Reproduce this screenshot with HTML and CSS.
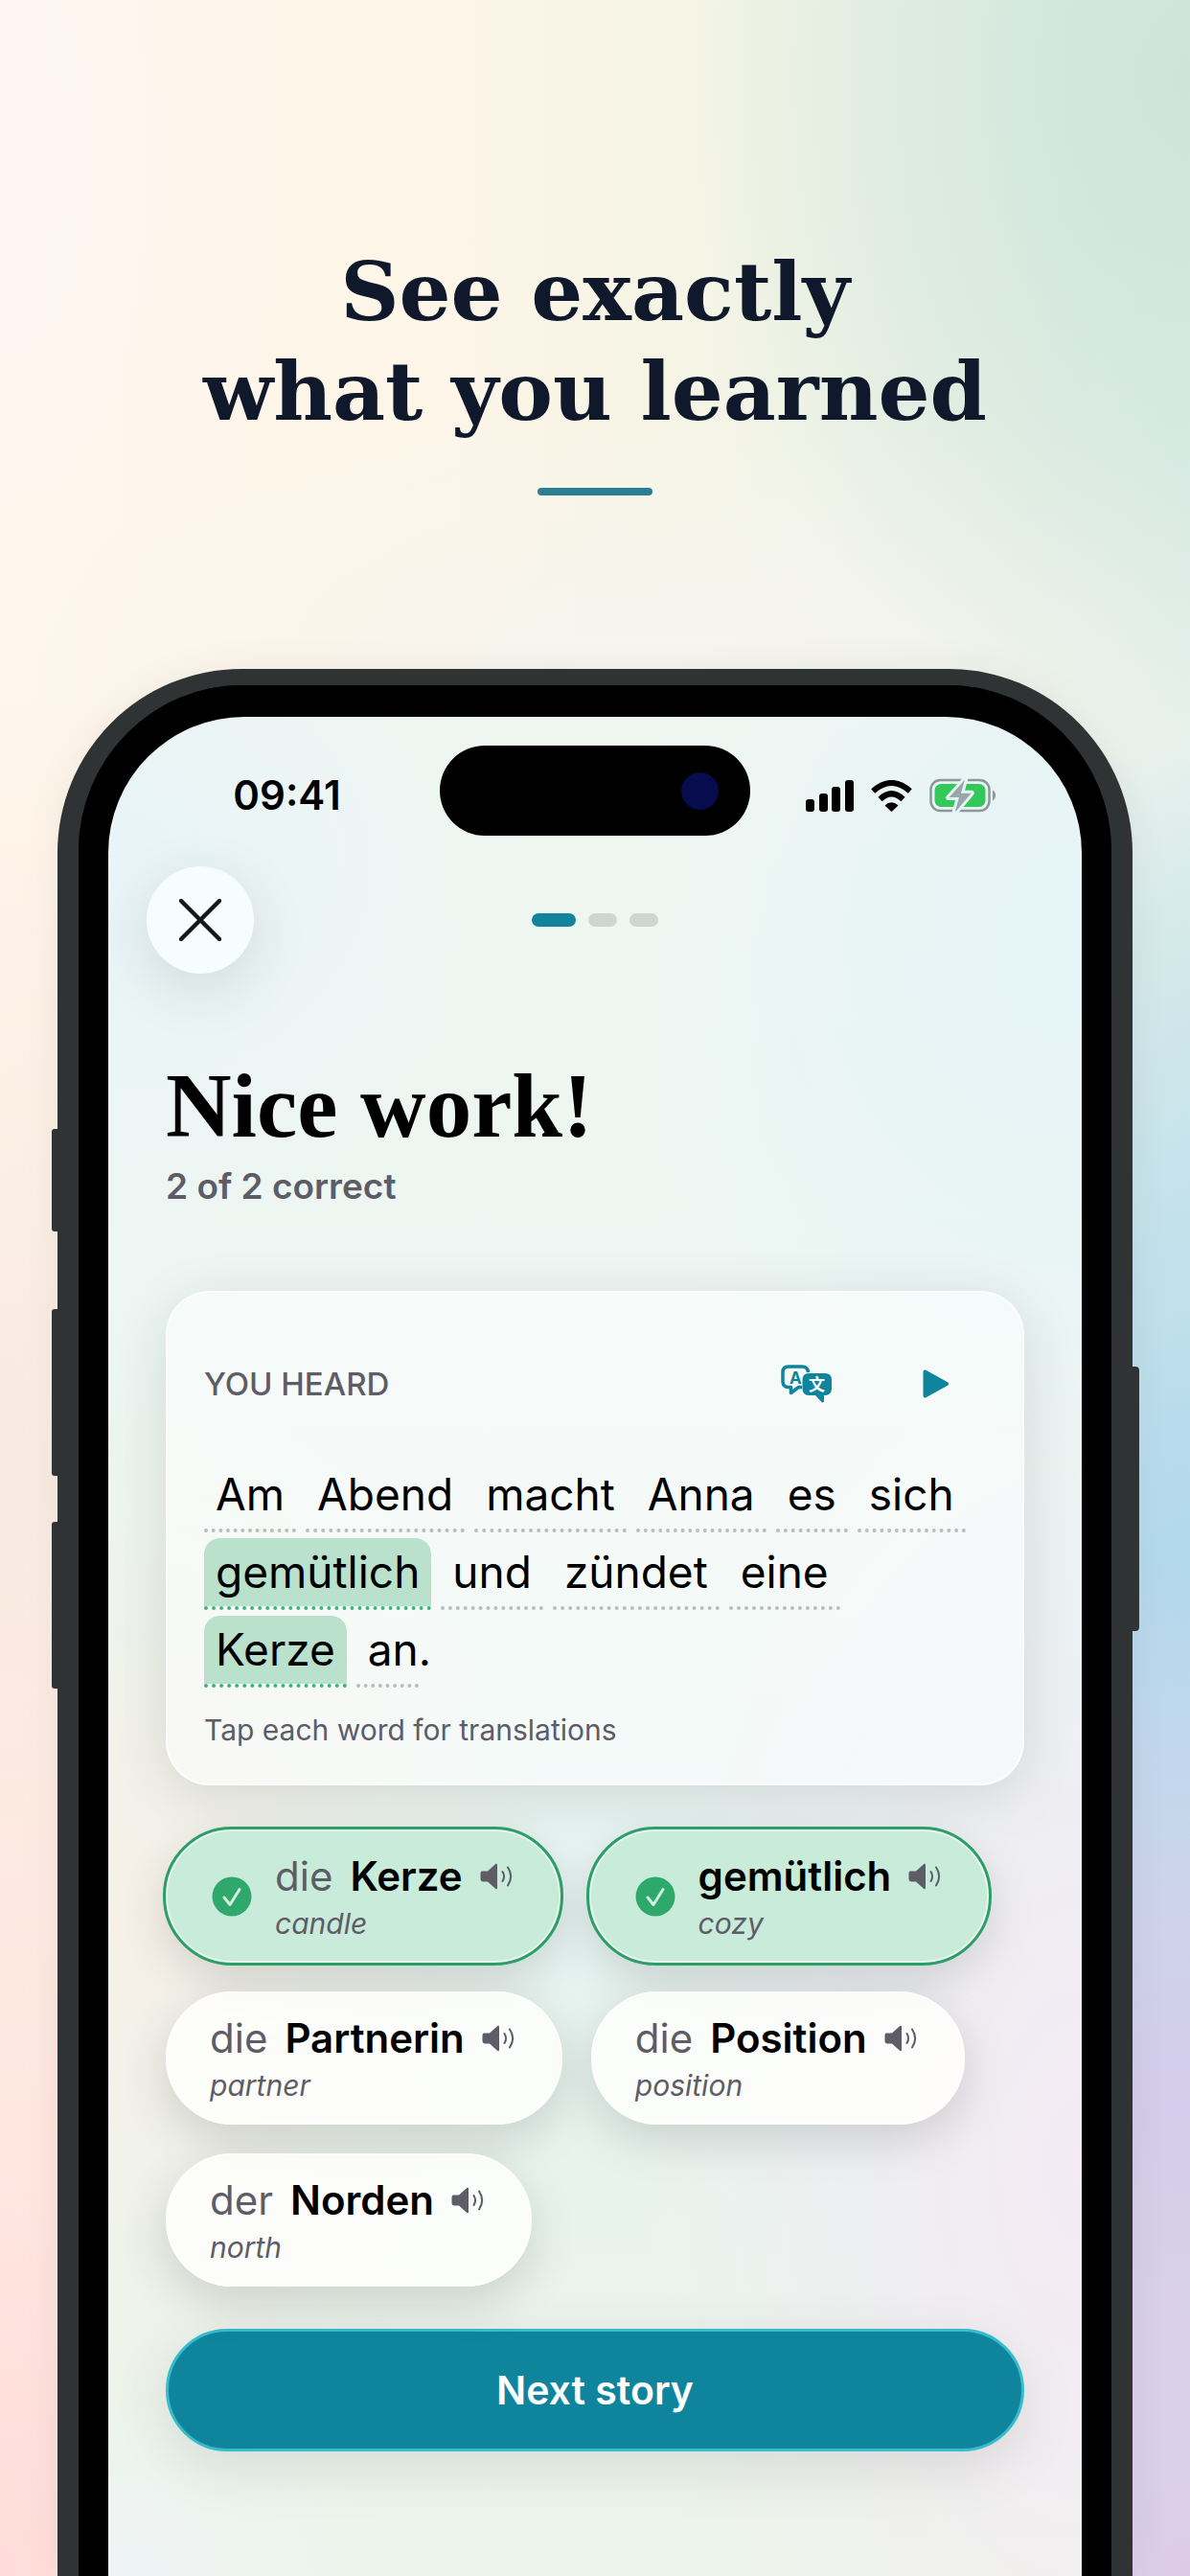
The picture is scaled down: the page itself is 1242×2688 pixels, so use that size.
FILE: index.html
```html
<!DOCTYPE html>
<html lang="en">
<head>
  <meta charset="UTF-8" />
  <meta name="viewport" content="width=device-width, initial-scale=1.0"/>
  <title>See exactly what you learned</title>
  <link rel="stylesheet" href="styles.css">
</head>
<body>
  <!-- shared icons -->
  <svg class="sprite" aria-hidden="true">
    <symbol id="speaker" viewBox="0 0 34 28">
      <path fill="currentColor" d="M2 8.500h6L16 1.200c1-.9 2-.5 2 .8v24c0 1.300-1 1.700-2 .8L8 19.500H3.500C1.500 19.500.5 18.500.5 16.500v-5c0-2 .5-3 1.500-3z"/>
      <path fill="none" stroke="currentColor" stroke-width="2" stroke-linecap="round" d="M23.500 9c2 3.200 2 6.800 0 10M29 4.500c4 6 4 13 0 19"/>
    </symbol>
    <symbol id="check" viewBox="0 0 42 42">
      <circle cx="21" cy="21" r="20.500" fill="#2fa86c"/>
      <path fill="none" stroke="#d3efdf" stroke-width="3" stroke-linecap="round" stroke-linejoin="round" d="M13 22l6 7.500L29 13.500"/>
    </symbol>
  </svg>

  <header class="hero">
    <h1>See exactly<br>what you learned</h1>
    <div class="rule"></div>
  </header>

  <main class="phone">
    <span class="side-btn action"></span>
    <span class="side-btn vol-up"></span>
    <span class="side-btn vol-down"></span>
    <span class="side-btn power"></span>

    <div class="bezel">
      <div class="screen">
        <div class="status">
          <span class="time">09:41</span>
          <div class="island"><span class="camera"></span></div>
          <div class="status-icons">
            <svg width="50" height="33" viewBox="0 0 50 33">
              <rect x="0" y="20" width="9" height="13" rx="3"/>
              <rect x="14" y="14" width="9" height="19" rx="3"/>
              <rect x="27" y="7" width="9" height="26" rx="3"/>
              <rect x="41" y="0" width="9" height="33" rx="3"/>
            </svg>
            <svg width="43" height="33" viewBox="0 0 43 33">
              <path fill="none" stroke="#000" stroke-width="6" d="M2.200 11.500Q21.500-5.500 40.800 11.500M9.500 20Q21.500 8.500 33.500 20"/>
              <path d="M14.500 26.500q7-6.500 14 0l-6.300 6q-.7.600-1.400 0z"/>
            </svg>
            <svg width="70" height="36" viewBox="0 0 70 36">
              <rect x="1.500" y="2" width="61" height="32" rx="10" fill="none" stroke="#8f9698" stroke-width="2.500"/>
              <path d="M66 12.500c4 2 4 9 0 11z" fill="#8f9698"/>
              <rect x="5.500" y="6" width="53" height="24" rx="6.500" fill="#34c759"/>
              <path d="M36.500 0L19 19.500q-1 2 1 2h9L25 36h3.500L45 16.500q1-2.200-1.200-2.200H35L39 0z" fill="#9aa6a8" stroke="#e5f4f7" stroke-width="3"/>
            </svg>
          </div>
        </div>

        <nav class="topbar">
          <button class="close" type="button" aria-label="Close">
            <svg width="44" height="44" viewBox="0 0 44 44"><path d="M2 2l40 40M42 2L2 42" stroke="#13191b" stroke-width="4.500" stroke-linecap="round"/></svg>
          </button>
          <div class="steps"><i class="on"></i><i></i><i></i></div>
        </nav>

        <div class="content">
          <h2>Nice work!</h2>
          <p class="score">2 of 2 correct</p>

          <section class="card">
            <div class="card-head">
              <h3>YOU HEARD</h3>
              <button class="icon-btn" type="button" aria-label="Translate">
                <svg width="54" height="40" viewBox="0 0 54 40">
                  <path fill="none" stroke="#0f859d" stroke-width="3.500" stroke-linejoin="round" d="M22 23.500h-3.500l-8 6v-6H8q-6 0-6-6V8q0-6 6-6h14q6 0 6.500 6"/>
                  <path fill="#0f859d" d="M29 9h17q7 0 7 7v9q0 6.500-7 7h-1v6.500q-1 1.500-2.500.5L36 32h-7q-6.500-.5-6.500-7v-9q0-7 6.500-7z"/>
                  <text class="lat" x="9" y="20">A</text>
                  <text class="han" x="29" y="27">文</text>
                </svg>
              </button>
              <button class="icon-btn" type="button" aria-label="Play">
                <svg width="27" height="30" viewBox="0 0 27 30"><path d="M2.500 2.500v25L25 15z" fill="#0f859d" stroke="#0f859d" stroke-width="4" stroke-linejoin="round"/></svg>
              </button>
            </div>
            <div class="sentence" lang="de">
              <button type="button">Am</button>
              <button type="button">Abend</button>
              <button type="button">macht</button>
              <button type="button">Anna</button>
              <button type="button">es</button>
              <button type="button">sich</button>
              <button type="button" class="hit">gemütlich</button>
              <button type="button">und</button>
              <button type="button">zündet</button>
              <button type="button">eine</button>
              <button type="button" class="hit">Kerze</button>
              <span class="end"><button type="button">an</button>.</span>
            </div>
            <p class="hint">Tap each word for translations</p>
          </section>

          <div class="chips">
            <button type="button" class="chip known">
              <svg class="tick"><use href="#check"/></svg>
              <span class="word"><span class="de">die <b>Kerze</b><svg class="say"><use href="#speaker"/></svg></span><em>candle</em></span>
            </button>
            <button type="button" class="chip known">
              <svg class="tick"><use href="#check"/></svg>
              <span class="word"><span class="de"><b>gemütlich</b><svg class="say"><use href="#speaker"/></svg></span><em>cozy</em></span>
            </button>
            <button type="button" class="chip">
              <span class="word"><span class="de">die <b>Partnerin</b><svg class="say"><use href="#speaker"/></svg></span><em>partner</em></span>
            </button>
            <button type="button" class="chip">
              <span class="word"><span class="de">die <b>Position</b><svg class="say"><use href="#speaker"/></svg></span><em>position</em></span>
            </button>
            <button type="button" class="chip">
              <span class="word"><span class="de">der <b>Norden</b><svg class="say"><use href="#speaker"/></svg></span><em>north</em></span>
            </button>
          </div>

          <button type="button" class="next">Next story</button>
        </div>
      </div>
    </div>
  </main>
</body>
</html>
```

FILE: styles.css
```css
* { box-sizing: border-box; margin: 0; padding: 0;}
body {
  font-family: Inter, "Liberation Sans", sans-serif;
  min-height: 100vh;
  display: flex;
  flex-direction: column;
  overflow-x: hidden;
  background:
    radial-gradient(ellipse 42% 26% at 100% 3%, #cde4d8 0%, #cde4d800 100%),
    radial-gradient(ellipse 50% 40% at 0% 100%, #ffdcd9 0%, #ffdcd900 100%),
    radial-gradient(ellipse 50% 30% at 100% 100%, #dccbe8 0%, #dccbe800 100%),
    radial-gradient(ellipse 50% 22% at 100% 82%, #cfcdec 0%, #cfcdec00 100%),
    radial-gradient(ellipse 50% 32% at 100% 61%, #b0d8ec 0%, #b0d8ec00 100%),
    radial-gradient(ellipse 50% 30% at 0% 57%, #f9eae1 0%, #f9eae100 100%),
    radial-gradient(ellipse 60% 12% at 60% 27%, #f6f5f0 0%, #f6f5f000 100%),
    radial-gradient(ellipse 25% 26% at 0% 6%, #fff6f3 0%, #fff6f300 100%),
    linear-gradient(90deg, #fff6ea 0%, #fdf5e8 38%, #f6f5e5 55%, #e9f1e6 80%, #deeeea 100%);
}
button { font: inherit; color: inherit; border: none; background: none; cursor: pointer;}
.sprite { position: absolute; width: 0; height: 0;}

.hero { padding: 252px 40px 181px; text-align: center;}
.hero h1 { font: bold 85px/104px "DejaVu Serif", serif; color: #10192b;}
.rule { width: 120px; height: 8px; margin: 49px auto 0; border-radius: 4px; background: #2a7f92;}

/* phone frame */
.phone { position: relative; flex: 1; display: flex; margin: 0 60px; border: solid #2f3333; border-width: 17px 22px 0; border-radius: 192px 192px 0 0; background: #000; box-shadow: 0 0 40px #0000000f;}
.bezel { flex: 1; display: flex; min-width: 0; border: solid #000; border-width: 33px 31px 0; border-radius: 172px 172px 0 0; background: #000;}
.side-btn { position: absolute; left: -28px; width: 8px; height: 174px; border-radius: 3px 0 0 3px; background: #2f3333;}
.action { top: 463px; height: 107px;}
.vol-up { top: 651px;}
.vol-down { top: 873px;}
.power { left: auto; right: -29px; top: 711px; height: 276px; border-radius: 0 4px 4px 0;}

.screen {
  flex: 1;
  min-width: 0;
  border-radius: 142px 142px 0 0;
  padding: 30px 0 60px;
  background:
    radial-gradient(ellipse 45% 30% at 0% 65%, #f6f0e7 0%, #f6f0e700 100%),
    radial-gradient(ellipse 45% 45% at 100% 78%, #f4ebf4 0%, #f4ebf400 100%),
    radial-gradient(ellipse 45% 20% at 0% 8%, #e8f4f8 0%, #e8f4f800 100%),
    radial-gradient(ellipse 50% 30% at 100% 12%, #e4f4f7 0%, #e4f4f700 100%),
    radial-gradient(ellipse 30% 10% at 0% 100%, #eff3f5 0%, #eff3f500 100%),
    linear-gradient(#f0f6f0 0%, #edf6f2 30%, #e6f3f0 65%, #edf4ea 100%);
}

.status { display: grid; grid-template-columns: 1fr 324px 1fr; align-items: center;}
.time { padding: 8px 0 0 27px; text-align: center; font-size: 42px; font-weight: 600;}
.island { height: 94px; border-radius: 47px; background: #000; display: flex; align-items: center; justify-content: flex-end; padding-right: 33px;}
.camera { width: 39px; height: 39px; border-radius: 50%; background: #060c4d;}
.status-icons { display: flex; align-items: center; gap: 18px; padding: 10px 0 0 58px;}

.topbar { display: grid; grid-template-columns: 1fr auto 1fr; align-items: center; padding: 32px 40px 0;}
.close { width: 112px; height: 112px; border-radius: 50%; background: #f5fdff; display: flex; align-items: center; justify-content: center; box-shadow: 0 16px 64px #0000001c;}
.steps { display: flex; gap: 13px;}
.steps i { width: 30px; height: 14px; border-radius: 7px; background: #cfd5d1;}
.steps .on { width: 46px; background: #0f859d;}

.content { padding: 86px 60px 0;}
h2 { font: bold 95px/104px "Liberation Serif", serif;}
.score { margin-top: 8px; font-size: 37px; line-height: 48px; font-weight: 600; color: #5d5c67;}

.card { margin-top: 85px; padding: 55px 38px 38px; border: 2px solid #ffffffb0; border-radius: 46px; background: #ffffff80; box-shadow: 0 12px 60px #0000001c;}
.card-head { display: flex; align-items: center; height: 80px; padding-right: 39px;}
.card-head h3 { flex: 1; font-size: 33px; font-weight: 500; color: #5d5c67;}
.icon-btn { display: flex;}
.icon-btn + .icon-btn { margin-left: 94px;}
.lat { font: bold 17px Inter, sans-serif; fill: #0f859d;}
.han { font: bold 17px "Noto Sans CJK SC", sans-serif; fill: #fff;}

.sentence { display: flex; flex-wrap: wrap; gap: 6px 10px; margin-top: 40px; padding-right: 16px; font-size: 46px; line-height: 71px;}
.sentence button { padding: 0 12px; border-bottom: 4px dotted #b9bdbc;}
.sentence .hit { background: #b9e1cc; border-bottom-color: #42b27c; border-radius: 16px 16px 0 0; background-clip: padding-box;}
.sentence .end button { padding-right: 0;}
.hint { margin-top: 26px; font-size: 30px; line-height: 36px; color: #5d5c67;}

.chips { display: flex; flex-wrap: wrap; gap: 30px; margin-top: 46px;}
.chip { display: flex; align-items: center; gap: 24px; padding: 23px 50px 23px 46px; border-radius: 69px; background: #fffffdd0; text-align: left; box-shadow: 0 16px 50px #00000024, inset 0 0 0 2px #fff8;}
.chip.known { padding-left: 48px; background: #c9ebda; outline: 3px solid #2c9f68;}
.tick { width: 42px; height: 42px;}
.word { display: flex; flex-direction: column; gap: 6px;}
.de { display: flex; align-items: center; gap: 18px; font-size: 42px; line-height: 51px; color: #5d5c67;}
.de b { color: #000; font-weight: 600;}
.say { width: 34px; height: 28px;}
.word em { font-size: 30px; line-height: 36px; color: #5d5c67;}

.next { display: block; width: 100%; height: 128px; margin-top: 44px; border: 3px solid #36bccb; border-radius: 64px; background: #0f859d; color: #fff; font-size: 41px; font-weight: 600; box-shadow: 0 16px 60px #0000001a;}
```
